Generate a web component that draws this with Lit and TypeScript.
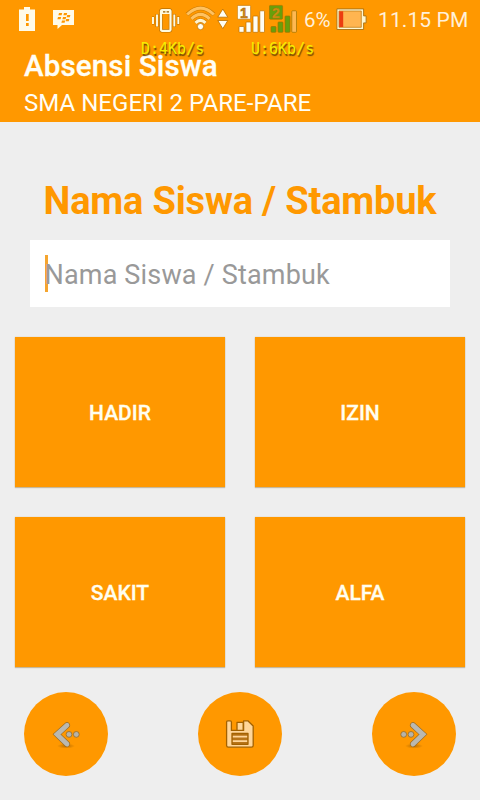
import { LitElement, html, css, svg } from "lit";
import { customElement } from "lit/decorators.js";

const chevron = (flip: boolean) => html`<svg class="glyph" viewBox="0 0 84 84">
  <defs>
    <radialGradient id="shade"><stop offset="0" stop-color="#8a5200" stop-opacity=".6" /><stop offset="1" stop-color="#8a5200" stop-opacity="0" /></radialGradient>
  </defs>
  <g transform=${flip ? "translate(84 0) scale(-1 1)" : ""}>
    <ellipse cx="42" cy="54" rx="9" ry="2.6" fill="url(#shade)" />
    <path d="M43 33.2 33 42.4 43 52" fill="none" stroke="#976b25" stroke-width="6" stroke-linecap="round" />
    <path d="M43 33.2 33 42.4 43 52" fill="none" stroke="#bab8b0" stroke-width="4.8" stroke-linecap="round" />
    <circle cx="45" cy="42.4" r="2.9" fill="#b5b3aa" stroke="#976b25" stroke-width=".8" />
    <circle cx="52.3" cy="42.4" r="2.9" fill="#b5b3aa" stroke="#976b25" stroke-width=".8" />
  </g>
</svg>`;

const floppy = html`<svg class="glyph" viewBox="0 0 84 84" fill="#ffd699" stroke="#a36200" stroke-width="1.3" stroke-linejoin="round">
  <path d="M28.6 30q0-1.2 1.2-1.2h2.4q1.2 0 1.2 1.2v8.4h12.2V28.8h4.2l5.4 5.2V53.5q0 1.7-1.7 1.7H30.3q-1.7 0-1.7-1.7z" />
  <path d="M39 30.4h6.2v8H39z" />
  <path d="M34 41.5h16v10.8H34z" fill="#b87519" />
  <path d="M34.8 44.7h14.4M34.8 49.1h14.4" stroke="#ffd699" stroke-width="1.7" />
</svg>`;

const bars = (main: string, last: string, edge: string) => svg`
  <g fill=${main} stroke=${edge} stroke-width=".7">
    <rect x="2" y="26.5" width="5" height="5.8" rx=".8" />
    <rect x="9" y="22" width="5" height="10.3" rx=".8" />
    <rect x="16" y="16" width="5" height="16.3" rx=".8" />
    <rect x="22.8" y="10.8" width="4.7" height="21.5" rx=".8" fill=${last} />
  </g>
  <rect x=".4" y="5.4" width="13.2" height="13.8" rx="1" fill=${main} stroke=${edge} stroke-width=".6" />`;

@customElement("app-root")
export class AppRoot extends LitElement {
  static styles = css`
    :host { display: block; position: relative; width: 480px; height: 800px; overflow: hidden; background: #eee; font-family: Roboto, sans-serif; }
    * { box-sizing: border-box; }
    .head { height: 122px; background: #ff9800; color: #fffef5; }
    .status { height: 38px; display: flex; align-items: flex-start; }
    .status svg { display: block; height: 38px; flex: none; }
    .space { flex: none; width: 75px; }
    .pct, .clock { line-height: 24px; padding-top: 8px; flex: none; white-space: nowrap; color: #fff0d9; }
    .pct { width: 32px; margin-left: 7px; font-size: 20.5px; }
    .clock { margin-left: 11px; font-size: 21px; letter-spacing: .1px; }
    .sim { font: bold 14px "Liberation Sans", sans-serif; }
    .title { margin: 10px 0 0 24px; font-size: 29.5px; line-height: 36px; font-weight: 500; letter-spacing: .15px; -webkit-text-stroke: .3px #fffef5; white-space: nowrap; }
    .sub { margin-left: 24px; font-size: 24px; line-height: 38px; letter-spacing: .04px; white-space: nowrap; }
    .rate { position: absolute; top: 40px; font: 15px/18px "DejaVu Sans Mono", monospace; color: #f4ef00; text-shadow: 1px 2px 1px #6b4a00; white-space: pre; }
    .down { left: 141px; }
    .up { left: 251px; }
    .label { margin: 56px 0 0; height: 46px; line-height: 46px; font-size: 38px; letter-spacing: -.18px; font-weight: 700; text-align: center; color: #ff9800; white-space: nowrap; }
    .field { margin: 16px 30px 0; height: 67px; padding-left: 15px; background: #fff; display: flex; align-items: center; font-size: 27px; letter-spacing: .17px; color: #999; white-space: nowrap; }
    .caret { width: 3px; height: 37px; background: #f5a52f; margin-right: -3px; }
    .hint { position: relative; top: 1px; left: -.5px; }
    .grid { margin: 30px 15px 0; display: grid; grid-template-columns: 210px 210px; grid-auto-rows: 150px; gap: 30px; }
    .tile { border: 0; padding: 2px 0 0; background: #ff9800; color: #fffef0; font: 500 21px/24px Roboto, sans-serif; -webkit-text-stroke: .3px #fffef0; box-shadow: 0 1px 1px rgba(120, 80, 0, .3), 0 0 1px rgba(160, 100, 0, .35); }
    .actions { display: flex; justify-content: space-between; margin: 25px 24px 0; }
    .round { width: 84px; height: 84px; border: 0; padding: 0; border-radius: 50%; background: #ff9800; }
    .glyph { display: block; width: 84px; height: 84px; }
  `;

  render() {
    return html`
      <div class="head">
        <div class="status">
          <svg width="77" viewBox="0 0 77 38" fill="#fffbe9">
            <path fill-rule="evenodd" d="M24 7h6v2.5h5V31H19V9.5h5zM26 14v7h2.7v-7zM26 23v3h2.7v-3z" />
            <path d="M53 10h21v15H62l-4.5 4v-4H53z" />
            <path fill="#ff9800" d="M59 13h3.2l-.6 2.3h-3.2zM64 13h3.2l-.6 2.3h-3.2zM58 17h3.2l-.6 2.3h-3.2zM63 17h3.2l-.6 2.3h-3.2zM67.2 15h3.2l-.6 2.3h-3.2zM66.2 19h3.2l-.6 2.3h-3.2zM62 20.5h3.2l-.6 2.3h-3.2z" />
          </svg>
          <div class="space"></div>
          <svg width="33" viewBox="152 0 33 38" fill="none" stroke="#fffbe0">
            <path d="M153 16.5v8M157 14v13M174.3 14v13M178.3 16.5v8" stroke="#b96f00" stroke-width="2.8" />
            <rect x="161" y="10" width="9.5" height="20.8" rx="1" stroke="#b96f00" stroke-width="3.4" />
            <path d="M153 17v7M157 14.5v12M174.3 14.5v12M178.3 17v7" stroke-width="1.9" />
            <rect x="161" y="10" width="9.5" height="20.8" rx="1" stroke-width="2.2" />
            <path d="M161 12.2h9.5" stroke-width="3.6" /><path d="M163 11.8h2.4M166.6 11.8h2.4" stroke="#9c6000" stroke-width="1.2" />
          </svg>
          <svg width="52" viewBox="185 0 52 38">
            <path d="M187 14.5Q200.5 1.8 214 14.5M191.2 18.8Q200.5 9.8 209.8 18.8M195.3 22.8Q200.5 17.8 205.7 22.8" fill="none" stroke="#c97900" stroke-width="4" />
            <g fill="none" stroke-width="3.1">
              <path d="M187.2 14.5Q200.5 1.8 213.8 14.5M191.4 18.8Q200.5 9.8 209.6 18.8" stroke="#ffc15f" />
              <path d="M195.5 22.8Q200.5 17.8 205.5 22.8" stroke="#fff4ce" />
            </g>
            <circle cx="200.5" cy="26.6" r="3.1" fill="#fffef4" stroke="#b96f00" stroke-width=".7" />
            <path d="m222.8 9 5 8.2h-10zM217.8 20.5h10l-5 8.2z" fill="#fffef4" stroke="#b96f00" stroke-width=".8" />
          </svg>
          <svg width="32" viewBox="0 0 32 38">${bars("#fffef4", "#fffef4", "#b96f00")}<text class="sim" x="3" y="17.5" fill="#d48b1c" stroke="#a36000" stroke-width=".5">1</text></svg>
          <svg width="28" viewBox="0 0 28 38">${bars("#689f0b", "#ffb851", "#9b7300")}<text class="sim" x="3" y="17.5" fill="#d49316" stroke="#b27800" stroke-width=".4">2</text></svg>
          <div class="pct">6%</div>
          <svg width="31" viewBox="336 0 31 38">
            <path d="M336.9 8.9h26.7v7h2.5v7h-2.5v6.6h-26.7z" fill="#fff7d0" stroke="#a87012" stroke-width=".9" />
            <path d="M339 11h22.3v16.3H339z" fill="#ffb550" stroke="#b87510" stroke-width=".7" />
            <path d="M339.2 11.3h4v15.7h-4z" fill="#ec3d10" />
          </svg>
          <div class="clock">11.15 PM</div>
        </div>
        <div class="title">Absensi Siswa</div>
        <div class="sub">SMA NEGERI 2 PARE-PARE</div>
      </div>
      <div class="rate down">D:4Kb/s</div>
      <div class="rate up">U:6Kb/s</div>
      <div class="label">Nama Siswa / Stambuk</div>
      <div class="field"><span class="caret"></span><span class="hint">Nama Siswa / Stambuk</span></div>
      <div class="grid">
        ${["HADIR", "IZIN", "SAKIT", "ALFA"].map((t) => html`<button class="tile">${t}</button>`)}
      </div>
      <div class="actions">
        <button class="round" aria-label="Sebelumnya">${chevron(false)}</button>
        <button class="round" aria-label="Simpan">${floppy}</button>
        <button class="round" aria-label="Berikutnya">${chevron(true)}</button>
      </div>
    `;
  }
}
